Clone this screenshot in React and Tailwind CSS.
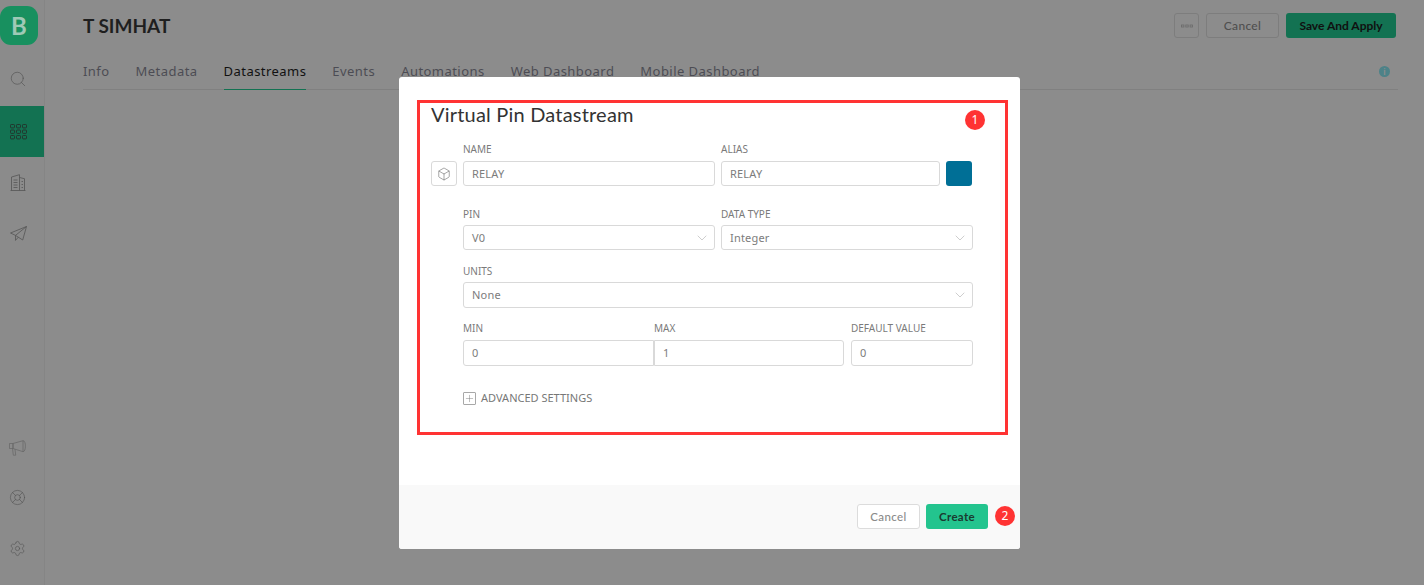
import React from 'react';
import { Search, LifeBuoy, Settings, Box, ChevronDown, Plus } from 'lucide-react';

const head = { fontFamily: '"Lato", "Open Sans", sans-serif' };

function GridIcon() {
  const cells = [];
  for (let y = 0; y < 3; y++) {
    for (let x = 0; x < 3; x++) {
      cells.push(<rect key={`${x}-${y}`} x={0.5 + x * 6} y={0.5 + y * 5.5} width="4" height="3.4" rx="0.8" />);
    }
  }
  return (
    <svg width="17" height="16" viewBox="0 0 17 16" fill="none" stroke="#23362e" strokeWidth="1">
      {cells}
    </svg>
  );
}

function BuildingIcon() {
  return (
    <svg width="16" height="17" viewBox="0 0 16 17" fill="none" stroke="#555" strokeWidth="0.8">
      <path d="M0.5 16.5h15M1.5 16.5V3l8-2.3v15.8M9.5 3.5l5 1.2v11.8" />
      <path d="M3.5 6h4M3.5 8.5h4M3.5 11h4M3.5 13.5h4M11.5 7.5h1.5M11.5 10.5h1.5M11.5 13.5h1.5" />
    </svg>
  );
}

function PlaneIcon() {
  return (
    <svg width="17" height="15" viewBox="0 0 17 15" fill="none" stroke="#555" strokeWidth="0.8" strokeLinejoin="round">
      <path d="M16.5 0.5L0.5 7l5 2.4zM16.5 0.5l-3.8 13.5-7.2-4.6v5l2.8-3.2" />
    </svg>
  );
}

function HornIcon() {
  return (
    <svg width="17" height="16" viewBox="0 0 17 16" fill="none" stroke="#666" strokeWidth="0.7" strokeLinejoin="round">
      <path d="M0.5 3.5h3.5v5h-3.5zM4 3.5l10-2.8v11l-10-3.2zM14 0.7c1.6 0 2.4 2.4 2.4 5.4s-0.8 5.6-2.4 5.6M3.5 8.5l0.8 6.7h2.4l-0.7-6" />
    </svg>
  );
}

function Label({ children, tight }) {
  return (
    <div className={`h-[14px] text-[10px] leading-[14px] text-[#7a7a7a] ${tight ? 'mb-[4px]' : 'mb-[5px]'}`}>
      {children}
    </div>
  );
}

function Field({ value, className = '', select }) {
  return (
    <div className={`flex h-[25px] items-center justify-between rounded-[3px] border border-[#d9d9d9] bg-white pl-[8px] pr-[4px] text-[11px] tracking-[0.2px] text-[#7c7c7c] ${className}`}>
      <span className="pt-[1px]">{value}</span>
      {select && <ChevronDown size={16} strokeWidth={0.8} className="text-[#a3a3a3]" />}
    </div>
  );
}

function Badge({ n, className }) {
  return (
    <div className={`absolute flex h-[20px] w-[20px] items-center justify-center rounded-full bg-[#ff3333] text-[12px] text-white ${className}`}>
      {n}
    </div>
  );
}

const tabs = ['Info', 'Metadata', 'Datastreams', 'Events', 'Automations', 'Web Dashboard', 'Mobile Dashboard'];

export default function App() {
  return (
    <div className="relative flex h-screen overflow-hidden bg-[#8c8c8c]" style={{ fontFamily: '"Noto Sans", "Open Sans", sans-serif' }}>
      <aside className="flex w-[45px] shrink-0 flex-col border-r border-[#858585] bg-[#8b8b8b] pt-[6px]">
        <div className="flex h-[39px] w-[38px] items-center justify-center rounded-[11px] bg-[#18905f] text-[24px] font-bold text-[#9fc9b6]" style={head}>B</div>
        <div className="mt-[25px] flex h-[18px] w-[27px] items-center justify-end">
          <Search size={18} strokeWidth={0.9} className="text-[#555]" />
        </div>
        <div className="mt-[18px] flex h-[51px] w-[44px] items-center bg-[#137252] pl-[10px]">
          <GridIcon />
        </div>
        <div className="mt-[17px] flex w-[36px] justify-center">
          <BuildingIcon />
        </div>
        <div className="mt-[35px] flex w-[36px] justify-center">
          <PlaneIcon />
        </div>
        <div className="mt-auto flex flex-col items-center pb-[28px] pr-[9px]">
          <HornIcon />
          <LifeBuoy size={17} strokeWidth={0.9} className="mt-[33px] text-[#555]" />
          <Settings size={17} strokeWidth={0.9} className="mt-[34px] text-[#555]" />
        </div>
      </aside>

      <main className="flex-1 pl-[38px] pr-[26px]">
        <div className="flex h-[62px] items-center justify-between pb-[12px] pt-[1px]">
          <h1 className="pt-[1px] text-[19px] font-bold text-[#1f1f1f]" style={head}>T SIMHAT</h1>
          <div className="flex items-center gap-[7px] pr-[2px]" style={head}>
            <div className="flex h-[25px] w-[25px] items-center justify-center rounded-[3px] border border-[#7d7d7d] text-[#6a6a6a]">
              <svg width="12" height="4" viewBox="0 0 12 4" fill="none" stroke="currentColor" strokeWidth="0.8">
                <rect x="0.5" y="1" width="2.4" height="2" />
                <rect x="4.8" y="1" width="2.4" height="2" />
                <rect x="9.1" y="1" width="2.4" height="2" />
              </svg>
            </div>
            <div className="flex h-[25px] w-[73px] items-center justify-center rounded-[3px] border border-[#7d7d7d] text-[12px] font-medium tracking-[0.3px] text-[#4f4f4f]">Cancel</div>
            <div className="flex h-[25px] w-[110px] items-center justify-center rounded-[3px] bg-[#137252] text-[12px] font-bold text-[#101010]">Save And Apply</div>
          </div>
        </div>
        <div className="flex h-[28px] items-start justify-between border-b border-[#808080]">
          <div className="flex gap-[26px]">
            {tabs.map((t) => (
              <div
                key={t}
                className={`h-[28px] text-[13px] leading-[18px] tracking-[0.45px] ${t === 'Datastreams' ? 'border-b border-[#137252] text-[#111]' : 'text-[#4c4c54]'}`}
              >
                {t}
              </div>
            ))}
          </div>
          <div className="mr-[8px] mt-[4px] flex h-[11px] w-[11px] items-center justify-center rounded-full bg-[#4d8288] text-[8px] font-bold leading-none text-[#8c8c8c]">i</div>
        </div>
      </main>

      {/* modal */}
      <div className="absolute left-[399px] top-[77px] flex h-[472px] w-[621px] flex-col overflow-hidden rounded-[3px] bg-white">
        <div className="flex-1 pl-[32px] pr-[47px] pt-[25px]">
          <h2 className="h-[24px] text-[20px] leading-[24px] tracking-[0.2px] text-[#333]" style={head}>Virtual Pin Datastream</h2>

          <div className="mt-[16px] flex items-end gap-[6px]">
            <div className="flex h-[25px] w-[26px] items-center justify-center rounded-[3px] border border-[#d9d9d9]">
              <Box size={14} strokeWidth={0.9} className="text-[#555]" />
            </div>
            <div className="w-[252px]">
              <Label>NAME</Label>
              <Field value="RELAY" />
            </div>
            <div className="w-[219px]">
              <Label>ALIAS</Label>
              <Field value="RELAY" />
            </div>
            <div className="h-[25px] w-[26px] rounded-[3px] bg-[#006f96]" />
          </div>

          <div className="ml-[32px] mt-[21px] flex gap-[6px]">
            <div className="w-[252px]">
              <Label tight>PIN</Label>
              <Field value="V0" select />
            </div>
            <div className="w-[252px]">
              <Label tight>DATA TYPE</Label>
              <Field value="Integer" select />
            </div>
          </div>

          <div className="ml-[32px] mt-[14px] w-[510px]">
            <Label tight>UNITS</Label>
            <Field value="None" select className="!h-[26px]" />
          </div>

          <div className="ml-[32px] mt-[13px] flex w-[510px]">
            <div className="w-[191px]">
              <Label>MIN</Label>
              <Field value="0" className="!h-[26px] rounded-r-none" />
            </div>
            <div className="w-[190px]">
              <Label>MAX</Label>
              <Field value="1" className="!h-[26px] rounded-l-none" />
            </div>
            <div className="ml-[7px] w-[122px]">
              <Label>DEFAULT VALUE</Label>
              <Field value="0" className="!h-[26px]" />
            </div>
          </div>

          <div className="ml-[32px] mt-[25px] flex h-[14px] items-center gap-[5px] text-[11px] text-[#777]">
            <div className="flex h-[13px] w-[13px] items-center justify-center rounded-[1px] border border-[#a8a8a8]">
              <Plus size={11} strokeWidth={1} className="text-[#777]" />
            </div>
            ADVANCED SETTINGS
          </div>
        </div>

        <div className="flex h-[64px] items-start justify-end gap-[6px] bg-[#f9f9f9] pr-[32px] pt-[19px]" style={head}>
          <div className="flex h-[25px] w-[63px] items-center justify-center rounded-[3px] border border-[#dcdcdc] bg-white text-[11.5px] font-medium tracking-[0.4px] text-[#8a8a8a]">Cancel</div>
          <div className="flex h-[25px] w-[62px] items-center justify-center rounded-[3px] bg-[#23c48e] text-[11.5px] font-bold tracking-[0.3px] text-[#1a3a30]">Create</div>
        </div>
      </div>

      {/* red annotation on top of the screenshot */}
      <div className="absolute left-[417px] top-[100px] h-[335px] w-[591px] border-[3px] border-[#ff3333]" />
      <Badge n="1" className="left-[965px] top-[110px]" />
      <Badge n="2" className="left-[995px] top-[506px]" />
    </div>
  );
}
